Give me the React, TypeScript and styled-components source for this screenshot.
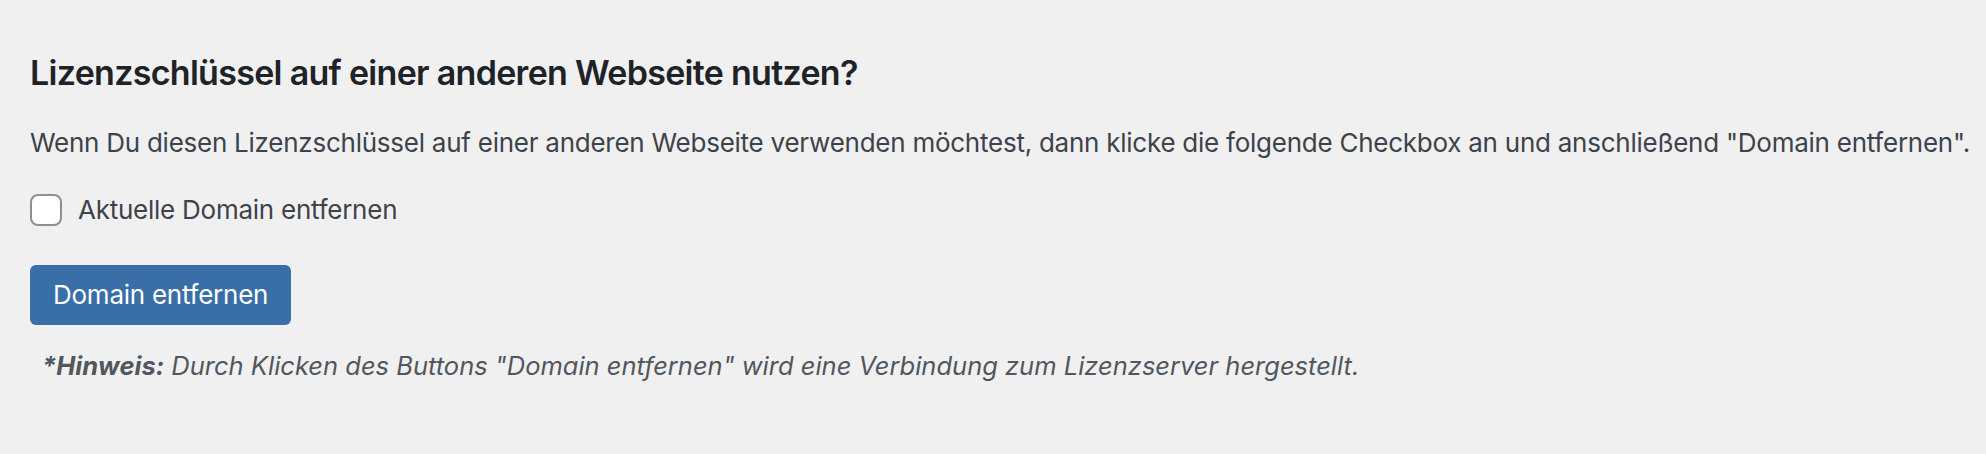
import React from 'react';
import styled, { createGlobalStyle } from 'styled-components';

const GlobalStyle = createGlobalStyle`
  html, body {
    margin: 0;
    padding: 0;
    background: #f0f0f1;
  }
  body {
    font-family: Inter, "Noto Sans", "Liberation Sans", sans-serif;
    color: #3c434a;
    letter-spacing: -0.25px;
  }
`;

const Section = styled.section`
  display: flex;
  flex-direction: column;
  align-items: flex-start;
  padding: 51px 10px 0 30px;
`;

const Title = styled.h2`
  margin: 0 0 30px 0;
  font-size: 34px;
  line-height: 44px;
  font-weight: 600;
  letter-spacing: -0.7px;
  color: #1d2327;
`;

const Text = styled.p`
  margin: 0 0 33px 0;
  font-size: 26px;
  line-height: 36px;
  white-space: nowrap;
`;

const CheckRow = styled.label`
  display: flex;
  align-items: center;
  gap: 16px;
  height: 32px;
  font-size: 26px;
  line-height: 36px;
  margin-bottom: 39px;
`;

const Box = styled.input.attrs({ type: 'checkbox' })`
  appearance: none;
  margin: 0;
  width: 32px;
  height: 32px;
  border: 2px solid #8c8f94;
  border-radius: 8px;
  background: #fff;
  box-sizing: border-box;
`;

const Button = styled.button`
  height: 60px;
  padding: 0 23px;
  border: 0;
  border-radius: 6px;
  background: #3a6ea9;
  color: #fff;
  font-family: inherit;
  letter-spacing: inherit;
  font-size: 26px;
  line-height: 60px;
  margin-bottom: 23px;
`;

const Note = styled.p`
  margin: 0;
  padding-left: 12px;
  font-size: 25.5px;
  line-height: 36px;
  letter-spacing: 0;
  font-style: italic;
  color: #50575e;

  strong {
    font-weight: 700;
  }
`;

export default function App() {
  return (
    <>
      <GlobalStyle />
      <Section>
        <Title>Lizenzschlüssel auf einer anderen Webseite nutzen?</Title>
        <Text>
          Wenn Du diesen Lizenzschlüssel auf einer anderen Webseite verwenden möchtest, dann klicke die folgende Checkbox an und anschließend "Domain entfernen".
        </Text>
        <CheckRow>
          <Box />
          Aktuelle Domain entfernen
        </CheckRow>
        <Button type="button">Domain entfernen</Button>
        <Note>
          <strong>*Hinweis:</strong> Durch Klicken des Buttons "Domain entfernen" wird eine Verbindung zum Lizenzserver hergestellt.
        </Note>
      </Section>
    </>
  );
}
